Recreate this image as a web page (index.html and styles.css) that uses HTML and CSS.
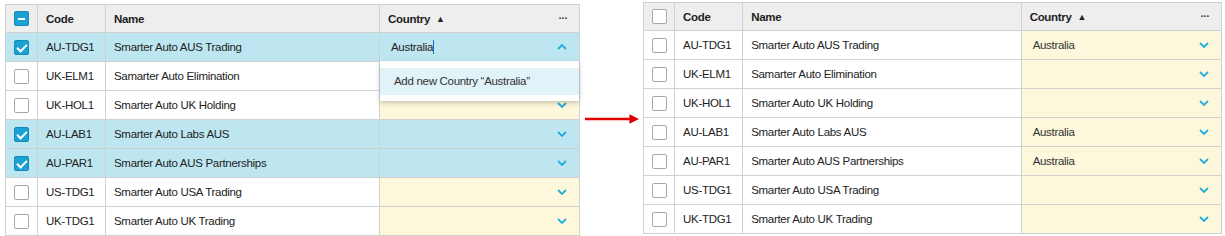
FILE: index.html
```html
<!DOCTYPE html>
<html lang="en">
<head>
  <meta charset="UTF-8" />
  <title>Country column - before and after</title>
  <link rel="stylesheet" href="styles.css">
</head>
<body>
  <div class="compare">
    <table class="grid grid-before">
      <colgroup>
        <col class="col-check"><col class="col-code"><col class="col-name-l"><col class="col-country">
      </colgroup>
      <thead>
        <tr>
          <th class="check-cell"><span class="box box-partial"></span></th>
          <th>Code</th>
          <th>Name</th>
          <th class="country-head">Country <span class="sort">&#9650;</span><span class="more">&middot;&middot;&middot;</span></th>
        </tr>
      </thead>
      <tbody>
        <tr class="selected">
          <td class="check-cell"><span class="box box-checked"></span></td>
          <td>AU-TDG1</td>
          <td>Smarter Auto AUS Trading</td>
          <td class="country editing">
            <span class="value">Australia<span class="caret"></span></span>
            <svg class="chev" viewBox="0 0 10 6"><path d="M1 5 L5 1 L9 5"/></svg>
            <div class="popup">
              <div class="popup-item">Add new Country &ldquo;Australia&rdquo;</div>
            </div>
          </td>
        </tr>
        <tr>
          <td class="check-cell"><span class="box"></span></td>
          <td>UK-ELM1</td>
          <td>Samarter Auto Elimination</td>
          <td class="country"><span class="value"></span><svg class="chev" viewBox="0 0 10 6"><path d="M1 1 L5 5 L9 1"/></svg></td>
        </tr>
        <tr>
          <td class="check-cell"><span class="box"></span></td>
          <td>UK-HOL1</td>
          <td>Smarter Auto UK Holding</td>
          <td class="country"><span class="value"></span><svg class="chev" viewBox="0 0 10 6"><path d="M1 1 L5 5 L9 1"/></svg></td>
        </tr>
        <tr class="selected">
          <td class="check-cell"><span class="box box-checked"></span></td>
          <td>AU-LAB1</td>
          <td>Smarter Auto Labs AUS</td>
          <td class="country"><span class="value"></span><svg class="chev" viewBox="0 0 10 6"><path d="M1 1 L5 5 L9 1"/></svg></td>
        </tr>
        <tr class="selected">
          <td class="check-cell"><span class="box box-checked"></span></td>
          <td>AU-PAR1</td>
          <td>Smarter Auto AUS Partnerships</td>
          <td class="country"><span class="value"></span><svg class="chev" viewBox="0 0 10 6"><path d="M1 1 L5 5 L9 1"/></svg></td>
        </tr>
        <tr>
          <td class="check-cell"><span class="box"></span></td>
          <td>US-TDG1</td>
          <td>Smarter Auto USA Trading</td>
          <td class="country"><span class="value"></span><svg class="chev" viewBox="0 0 10 6"><path d="M1 1 L5 5 L9 1"/></svg></td>
        </tr>
        <tr>
          <td class="check-cell"><span class="box"></span></td>
          <td>UK-TDG1</td>
          <td>Smarter Auto UK Trading</td>
          <td class="country"><span class="value"></span><svg class="chev" viewBox="0 0 10 6"><path d="M1 1 L5 5 L9 1"/></svg></td>
        </tr>
      </tbody>
    </table>

    <div class="arrow">
      <svg viewBox="0 0 60 12"><path d="M2 6 H50" /><polygon points="48,1 58,6 48,11" /></svg>
    </div>

    <table class="grid grid-after">
      <colgroup>
        <col class="col-check-r"><col class="col-code"><col class="col-name-r"><col class="col-country">
      </colgroup>
      <thead>
        <tr>
          <th class="check-cell"><span class="box"></span></th>
          <th>Code</th>
          <th>Name</th>
          <th class="country-head">Country <span class="sort">&#9650;</span><span class="more">&middot;&middot;&middot;</span></th>
        </tr>
      </thead>
      <tbody>
        <tr>
          <td class="check-cell"><span class="box"></span></td>
          <td>AU-TDG1</td>
          <td>Smarter Auto AUS Trading</td>
          <td class="country"><span class="value">Australia</span><svg class="chev" viewBox="0 0 10 6"><path d="M1 1 L5 5 L9 1"/></svg></td>
        </tr>
        <tr>
          <td class="check-cell"><span class="box"></span></td>
          <td>UK-ELM1</td>
          <td>Samarter Auto Elimination</td>
          <td class="country"><span class="value"></span><svg class="chev" viewBox="0 0 10 6"><path d="M1 1 L5 5 L9 1"/></svg></td>
        </tr>
        <tr>
          <td class="check-cell"><span class="box"></span></td>
          <td>UK-HOL1</td>
          <td>Smarter Auto UK Holding</td>
          <td class="country"><span class="value"></span><svg class="chev" viewBox="0 0 10 6"><path d="M1 1 L5 5 L9 1"/></svg></td>
        </tr>
        <tr>
          <td class="check-cell"><span class="box"></span></td>
          <td>AU-LAB1</td>
          <td>Smarter Auto Labs AUS</td>
          <td class="country"><span class="value">Australia</span><svg class="chev" viewBox="0 0 10 6"><path d="M1 1 L5 5 L9 1"/></svg></td>
        </tr>
        <tr>
          <td class="check-cell"><span class="box"></span></td>
          <td>AU-PAR1</td>
          <td>Smarter Auto AUS Partnerships</td>
          <td class="country"><span class="value">Australia</span><svg class="chev" viewBox="0 0 10 6"><path d="M1 1 L5 5 L9 1"/></svg></td>
        </tr>
        <tr>
          <td class="check-cell"><span class="box"></span></td>
          <td>US-TDG1</td>
          <td>Smarter Auto USA Trading</td>
          <td class="country"><span class="value"></span><svg class="chev" viewBox="0 0 10 6"><path d="M1 1 L5 5 L9 1"/></svg></td>
        </tr>
        <tr>
          <td class="check-cell"><span class="box"></span></td>
          <td>UK-TDG1</td>
          <td>Smarter Auto UK Trading</td>
          <td class="country"><span class="value"></span><svg class="chev" viewBox="0 0 10 6"><path d="M1 1 L5 5 L9 1"/></svg></td>
        </tr>
      </tbody>
    </table>
  </div>
</body>
</html>
```

FILE: styles.css
```css
* {
  margin: 0;
  padding: 0;
  box-sizing: border-box;
}

html, body {
  background: #fff;
  font-family: "Liberation Sans", Arial, sans-serif;
  font-size: 11.5px;
  letter-spacing: -0.3px;
  color: #222;
}

.compare {
  display: flex;
  align-items: flex-start;
  padding-left: 5px;
}

.grid {
  border-collapse: collapse;
  table-layout: fixed;
}

.grid-before {
  width: 575px;
  margin-top: 4px;
}

.grid-after {
  width: 579px;
  margin-top: 2px;
}

.col-check { width: 32px; }
.col-check-r { width: 31px; }
.col-code { width: 68px; }
.col-name-l { width: 274px; }
.col-name-r { width: 278px; }
.col-country { width: 200px; }

.grid th,
.grid td {
  border: 1px solid #d0d0d0;
  height: 29px;
  padding: 0 8px;
  text-align: left;
  white-space: nowrap;
}

.grid th {
  background: #eeeeee;
  font-weight: bold;
  height: 28px;
}

.grid td {
  background: #fff;
}

.grid .check-cell {
  padding: 0;
  text-align: center;
}

.box {
  display: inline-block;
  width: 15px;
  height: 15px;
  border: 1px solid #a8a8a8;
  border-radius: 2px;
  background: #fff;
  vertical-align: middle;
  position: relative;
}

.box-checked,
.box-partial {
  background: #1ba2d4;
  border-color: #1689b5;
}

.box-checked::after {
  content: "";
  position: absolute;
  left: 4px;
  top: 1px;
  width: 4px;
  height: 8px;
  border: solid #fff;
  border-width: 0 2px 2px 0;
  transform: rotate(45deg);
}

.box-partial::after {
  content: "";
  position: absolute;
  left: 3px;
  top: 6px;
  width: 7px;
  height: 2px;
  background: #fff;
}

.country-head {
  position: relative;
}

.sort {
  font-size: 9px;
  margin-left: 3px;
  vertical-align: 1px;
}

.more {
  position: absolute;
  right: 12px;
  top: 7px;
  font-weight: bold;
  letter-spacing: -1px;
  color: #444;
}

.grid td.country {
  background: #fdf8dc;
  position: relative;
  padding-left: 11px;
}

.grid tr.selected td {
  background: #bde6f1;
}

.country .value {
  color: #333;
}

.chev {
  position: absolute;
  right: 12px;
  top: 11px;
  width: 10px;
  height: 6px;
  fill: none;
  stroke: #23aedb;
  stroke-width: 1.8;
}

.editing .value {
  color: #222;
}

.caret {
  display: inline-block;
  width: 1px;
  height: 14px;
  background: #1a6fc0;
  vertical-align: -3px;
}

.popup {
  position: absolute;
  left: 0;
  top: 28px;
  width: 199px;
  background: #fff;
  padding: 7px 0 6px;
  box-shadow: 0 2px 5px rgba(0, 0, 0, 0.22);
  z-index: 2;
}

.popup-item {
  background: #e1f2f8;
  height: 27px;
  line-height: 27px;
  padding-left: 14px;
  color: #333;
}

.arrow {
  width: 63px;
  padding: 113px 0 0 3px;
}

.arrow svg {
  width: 58px;
  height: 12px;
  display: block;
}

.arrow path {
  stroke: #e00000;
  stroke-width: 2.5;
}

.arrow polygon {
  fill: #e00000;
}
```
